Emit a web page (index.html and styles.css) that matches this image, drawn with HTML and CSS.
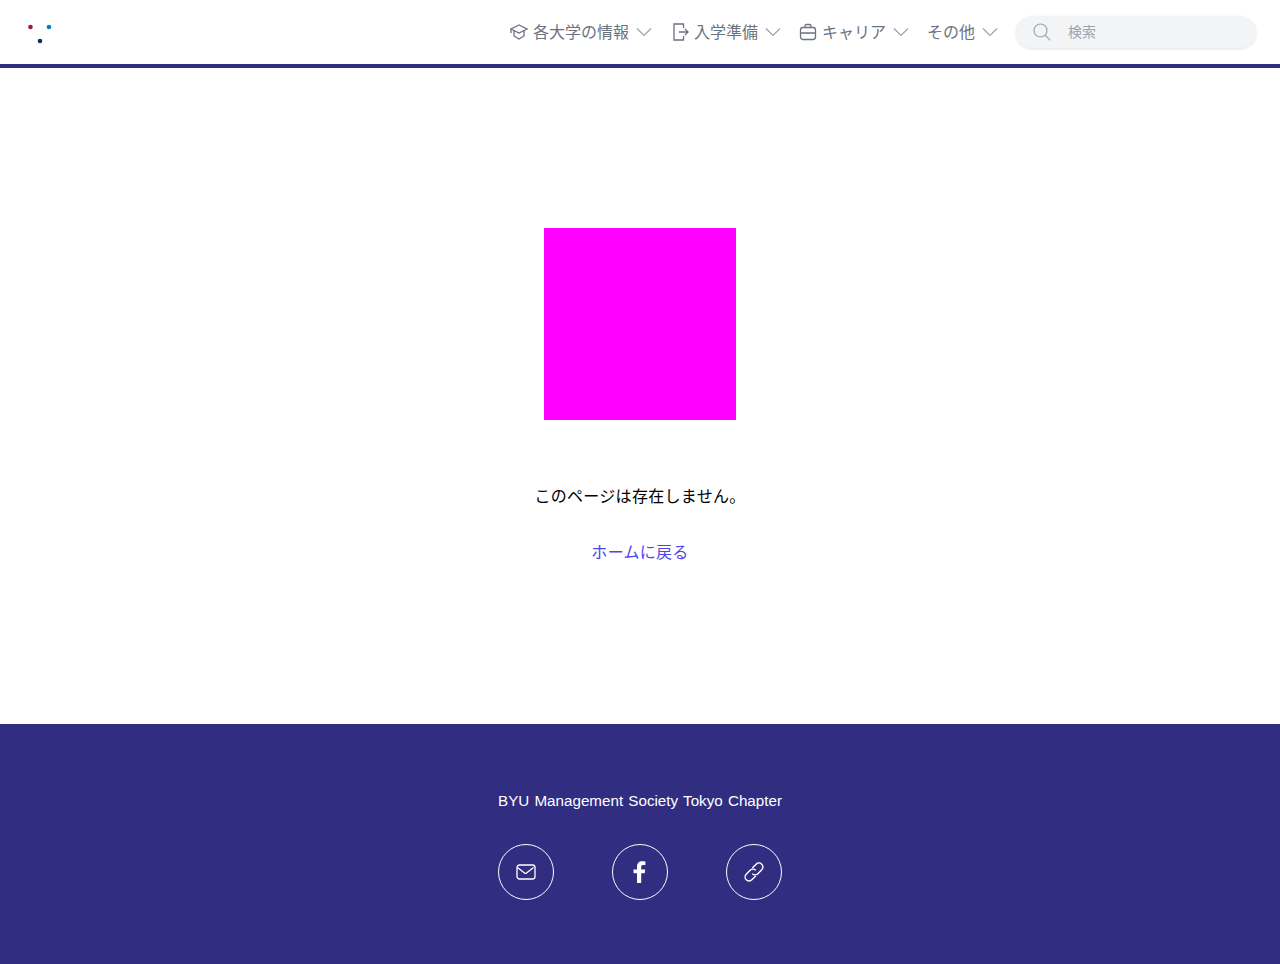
FILE: index.html
```html
<!DOCTYPE html>
<html lang="ja">
<head>
    <meta charset="UTF-8">
    <meta name="viewport" content="width=device-width, initial-scale=1.0">
    <title>BYU Management Society Tokyo Chapter</title>
    <link rel="stylesheet" href="styles.css">
</head>
<body>
    <header class="header">
        <a class="logo" href="#">
            <svg width="24" height="20" viewBox="0 0 24 20">
                <circle cx="2.500" cy="3" r="2.300" fill="#a3173f"/>
                <circle cx="21" cy="3" r="2.300" fill="#0a7cc0"/>
                <circle cx="12" cy="17" r="2.300" fill="#0b2f66"/>
            </svg>
        </a>
        <nav class="nav">
            <a class="nav-item" href="#">
                <svg class="nav-icon" viewBox="0 0 18 18">
                    <path d="M9 2 1 6l8 4 8-4z"/>
                    <path d="M4 8v5l5 3 5-3V8"/>
                    <path d="M1 6v4"/>
                </svg>
                <span>各大学の情報</span>
                <svg class="chevron" viewBox="0 0 16 10"><path d="M1 1.500 8 8.500l7-7"/></svg>
            </a>
            <a class="nav-item" href="#">
                <svg class="nav-icon nav-icon-narrow" viewBox="0 0 16 18">
                    <path d="M10.500 5V1H1v16h9.500v-4"/>
                    <path d="M6 9h9M12 6l3 3-3 3"/>
                </svg>
                <span>入学準備</span>
                <svg class="chevron" viewBox="0 0 16 10"><path d="M1 1.500 8 8.500l7-7"/></svg>
            </a>
            <a class="nav-item" href="#">
                <svg class="nav-icon" viewBox="0 0 18 18">
                    <rect x="1.500" y="4.500" width="15" height="12" rx="2.500"/>
                    <path d="M6 4.500V3a1.500 1.500 0 0 1 1.500-1.500h3A1.500 1.500 0 0 1 12 3v1.500"/>
                    <path d="M1.500 10h15M9 9.500v1.500"/>
                </svg>
                <span>キャリア</span>
                <svg class="chevron" viewBox="0 0 16 10"><path d="M1 1.500 8 8.500l7-7"/></svg>
            </a>
            <a class="nav-item" href="#">
                <span>その他</span>
                <svg class="chevron" viewBox="0 0 16 10"><path d="M1 1.500 8 8.500l7-7"/></svg>
            </a>
            <label class="search">
                <svg class="search-icon" viewBox="0 0 18 18">
                    <circle cx="7.500" cy="7.500" r="6.500"/>
                    <path d="m12.300 12.300 5 5"/>
                </svg>
                <input class="search-input" type="text" placeholder="検索">
            </label>
        </nav>
    </header>

    <main class="main">
        <div class="missing-image"></div>
        <p class="message">このページは存在しません。</p>
        <a class="home-link" href="#">ホームに戻る</a>
    </main>

    <footer class="footer">
        <p class="footer-title">BYU Management Society Tokyo Chapter</p>
        <div class="socials">
            <a class="social" href="#">
                <svg width="20" height="16" viewBox="0 0 20 16">
                    <rect x="1" y="1" width="18" height="14" rx="2.500"/>
                    <path d="m1.500 3.500 7 5.500a1.600 1.600 0 0 0 2 0l7-5.500"/>
                </svg>
            </a>
            <a class="social" href="#">
                <svg class="fill-icon" width="14" height="22" viewBox="0 0 14 22">
                    <path d="M4 22V12.300H.5V8.500H4V5.600C4 2.100 6.100.2 9.200.2c1.500 0 2.800.1 3.200.2v3.500h-2.200c-1.700 0-2 .8-2 2v2.600h4l-.5 3.800H8.200V22z"/>
                </svg>
            </a>
            <a class="social" href="#">
                <svg width="22" height="22" viewBox="1 1 20 20">
                    <path d="M9.450 7.450 12.950 3.950A3.600 3.600 0 0 1 18.050 9.050L14.550 12.550A3.600 3.600 0 0 1 9.450 12.550"/>
                    <path d="M12.550 14.550 9.050 18.050A3.600 3.600 0 0 1 3.950 12.950L7.450 9.450A3.600 3.600 0 0 1 12.550 9.450"/>
                </svg>
            </a>
        </div>
    </footer>
</body>
</html>
```

FILE: styles.css
```css
* {
    box-sizing: border-box;
}
body {
    margin: 0;
    font-family: "Noto Sans CJK JP", sans-serif;
    font-size: 16px;
    line-height: 24px;
    color: #000;
    background: #fff;
}
a {
    text-decoration: none;
}
p {
    margin: 0;
}
.header {
    height: 68px;
    padding: 0 24px 0 28px;
    border-bottom: 4px solid #312e81;
    display: flex;
    align-items: center;
    justify-content: space-between;
}
.logo {
    display: flex;
    margin-top: 4px;
}
.nav {
    display: flex;
    align-items: center;
}
.nav-item {
    display: flex;
    align-items: center;
    margin-right: 18px;
    color: #6b7280;
}
.nav-item span {
    margin-bottom: 2px;
}
.nav-item:first-child {
    margin-right: 21px;
}
.nav-icon {
    width: 18px;
    height: 18px;
    margin-right: 5px;
    fill: none;
    stroke: #6b7280;
    stroke-width: 1.300;
}
.nav-icon-narrow {
    width: 16px;
}
.chevron {
    width: 16px;
    height: 10px;
    margin-left: 7px;
    fill: none;
    stroke: #9ca3af;
    stroke-width: 1.200;
}
.search {
    width: 240px;
    height: 32px;
    padding-left: 17px;
    border-radius: 16px;
    background: #f3f4f6;
    box-shadow: 0 1px 3px rgba(0, 0, 0, 0.12);
    display: flex;
    align-items: center;
}
.search-icon {
    width: 18px;
    height: 18px;
    fill: none;
    stroke: #9ca3af;
    stroke-width: 1.200;
    flex-shrink: 0;
}
.search-input {
    width: 180px;
    margin-left: 17px;
    margin-bottom: 2px;
    padding: 0;
    border: 0;
    outline: 0;
    background: transparent;
    font-family: inherit;
    font-size: 14px;
}
.search-input::placeholder {
    color: #9ca3af;
    opacity: 1;
}
.main {
    height: 656px;
    padding-top: 160px;
    display: flex;
    flex-direction: column;
    align-items: center;
}
.missing-image {
    width: 192px;
    height: 192px;
    background: #ff00ff;
}
.message {
    margin-top: 63px;
    letter-spacing: 0.3px;
}
.home-link {
    margin-top: 32px;
    color: #4f46e5;
    letter-spacing: 0.3px;
}
.footer {
    height: 240px;
    padding-top: 64px;
    background: #312e81;
    color: #fff;
    display: flex;
    flex-direction: column;
    align-items: center;
}
.footer-title {
    font-family: "Liberation Sans", sans-serif;
    font-size: 15.200px;
    word-spacing: 1px;
    padding-top: 1px;
    margin-bottom: -1px;
}
.socials {
    width: 284px;
    margin-top: 32px;
    display: flex;
    justify-content: space-between;
}
.social {
    width: 56px;
    height: 56px;
    border: 1px solid #fff;
    border-radius: 50%;
    display: flex;
    align-items: center;
    justify-content: center;
}
.social svg {
    fill: none;
    stroke: #fff;
    stroke-width: 1.300;
}
.social .fill-icon {
    fill: #fff;
    stroke: none;
}
```
